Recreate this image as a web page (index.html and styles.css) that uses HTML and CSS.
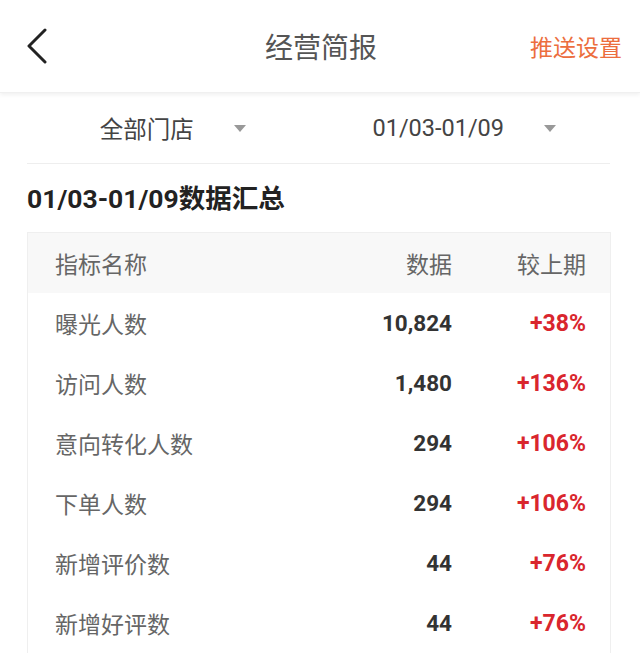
FILE: index.html
```html
<!DOCTYPE html>
<html lang="zh-CN">
<head>
    <meta charset="UTF-8">
    <meta name="viewport" content="width=device-width, initial-scale=1.0">
    <title>经营简报</title>
    <link rel="stylesheet" href="styles.css">
</head>
<body>
    <header class="topbar">
        <a class="back" href="#">
            <svg width="22" height="36" viewBox="0 0 22 36">
                <polyline points="19,2 3,18 19,34" fill="none" stroke="#222" stroke-width="3" stroke-linecap="round" stroke-linejoin="round"/>
            </svg>
        </a>
        <h1 class="title">经营简报</h1>
        <a class="action" href="#">推送设置</a>
    </header>

    <div class="filters">
        <div class="filter">
            <span>全部门店</span>
            <span class="caret"></span>
        </div>
        <div class="filter">
            <span>01/03-01/09</span>
            <span class="caret"></span>
        </div>
    </div>

    <h2 class="section-title">01/03-01/09数据汇总</h2>

    <div class="card">
        <div class="row head">
            <span>指标名称</span>
            <span class="num">数据</span>
            <span class="num">较上期</span>
        </div>
        <div class="row">
            <span>曝光人数</span>
            <span class="num value">10,824</span>
            <span class="num rate">+38%</span>
        </div>
        <div class="row">
            <span>访问人数</span>
            <span class="num value">1,480</span>
            <span class="num rate">+136%</span>
        </div>
        <div class="row">
            <span>意向转化人数</span>
            <span class="num value">294</span>
            <span class="num rate">+106%</span>
        </div>
        <div class="row">
            <span>下单人数</span>
            <span class="num value">294</span>
            <span class="num rate">+106%</span>
        </div>
        <div class="row">
            <span>新增评价数</span>
            <span class="num value">44</span>
            <span class="num rate">+76%</span>
        </div>
        <div class="row">
            <span>新增好评数</span>
            <span class="num value">44</span>
            <span class="num rate">+76%</span>
        </div>
    </div>
</body>
</html>
```

FILE: styles.css
```css
body {
    margin: 0;
    font-family: Roboto, "Noto Sans CJK SC", sans-serif;
    background-color: #fff;
    color: #333;
    overflow: hidden;
}
.topbar {
    height: 92px;
    display: grid;
    grid-template-columns: 1fr auto 1fr;
    align-items: center;
    padding: 0 18px 0 26px;
    box-shadow: 0 2px 4px rgba(0, 0, 0, 0.06);
    border-bottom: 1px solid #f0f0f0;
}
.back {
    display: flex;
    align-items: center;
}
.title {
    margin: 0 0 0 -6px;
    font-size: 28px;
    font-weight: normal;
    color: #555;
}
.action {
    justify-self: end;
    font-size: 23px;
    color: #ec6e3e;
    text-decoration: none;
}
.filters {
    margin: 0 30px 0 27px;
    height: 70px;
    display: grid;
    grid-template-columns: 1fr 1fr;
    border-bottom: 1px solid #eeeeee;
}
.filter {
    display: flex;
    align-items: center;
    justify-content: center;
    gap: 40px;
    font-size: 23.5px;
    color: #444;
}
.caret {
    width: 0;
    height: 0;
    border-left: 6px solid transparent;
    border-right: 6px solid transparent;
    border-top: 7px solid #999;
}
.section-title {
    margin: 17px 0 15px 27px;
    font-size: 26.5px;
    line-height: 36px;
    font-weight: bold;
    color: #222;
}
.card {
    margin: 0 29px 0 27px;
    border: 1px solid #efefef;
    border-bottom: none;
}
.row {
    height: 60px;
    display: grid;
    grid-template-columns: 1fr 120px 134px;
    align-items: center;
    padding: 0 24px 0 27px;
    font-size: 23px;
    color: #666;
}
.row.head {
    background-color: #f8f8f8;
}
.num {
    text-align: right;
}
.value {
    font-weight: bold;
    font-size: 22.5px;
    color: #333;
}
.rate {
    font-weight: bold;
    font-size: 23px;
    color: #d9262d;
}
```
